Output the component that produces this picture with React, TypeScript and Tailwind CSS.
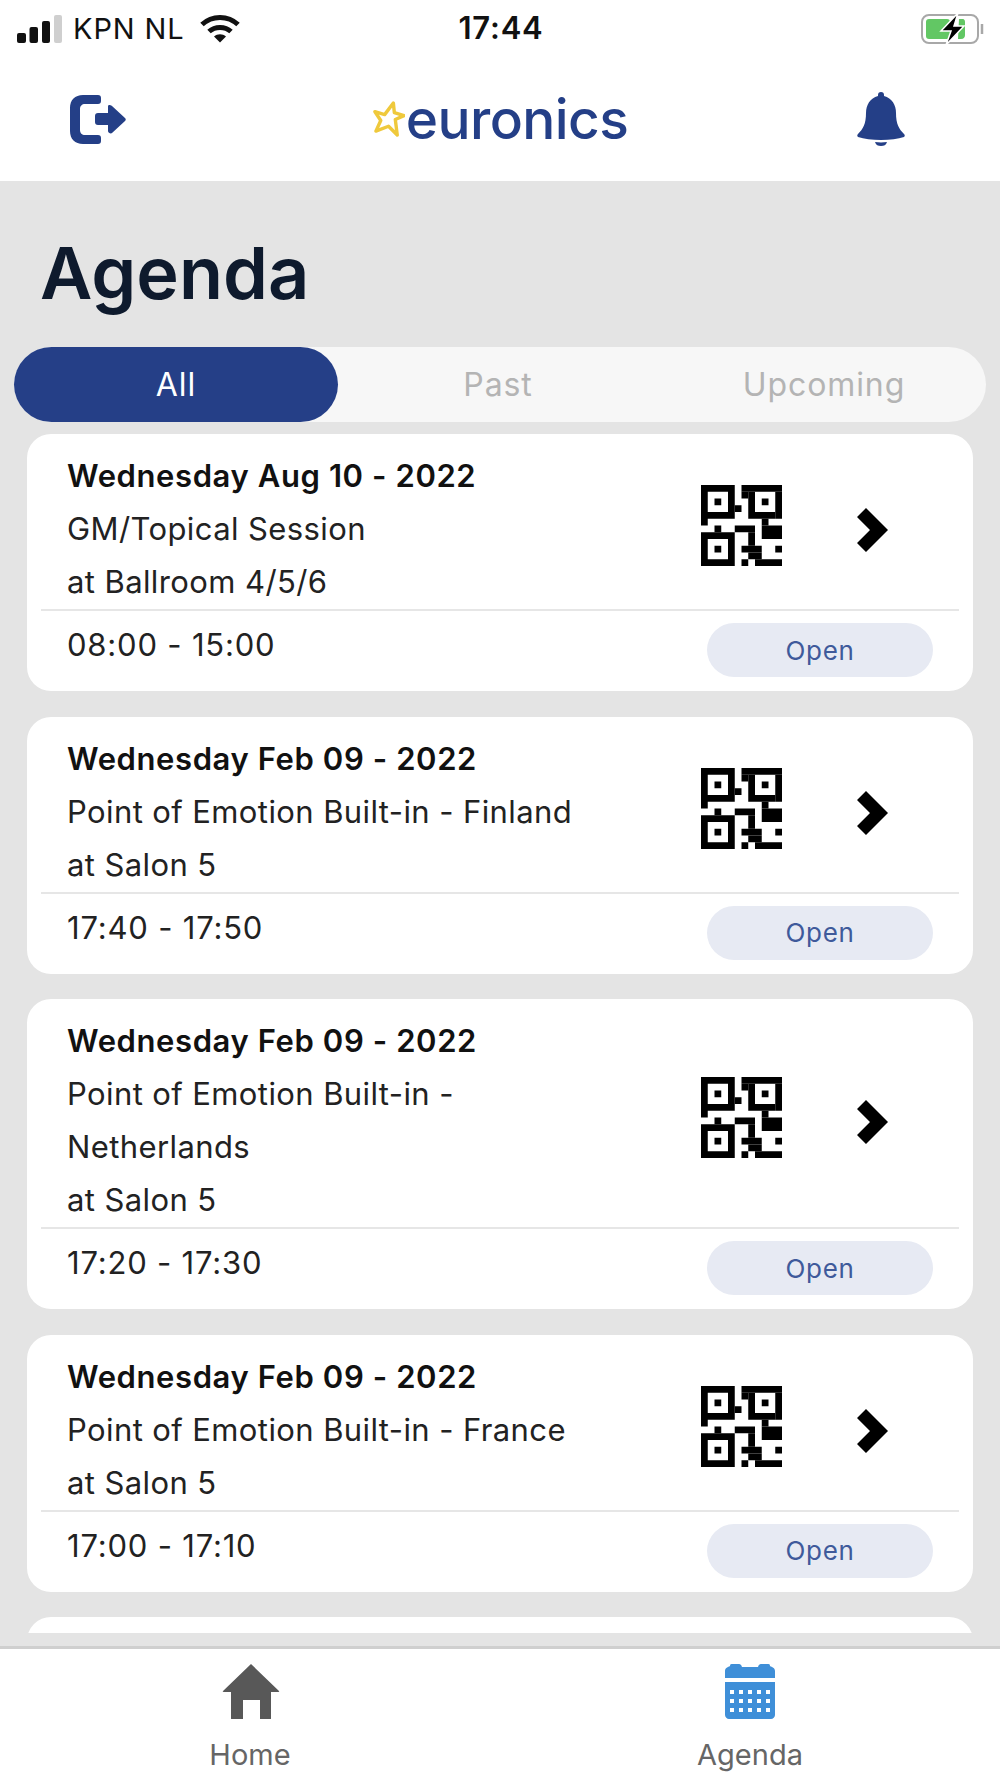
const events = [
  { date: 'Wednesday Aug 10 - 2022', lines: ['GM/Topical Session', 'at Ballroom 4/5/6'], time: '08:00 - 15:00' },
  { date: 'Wednesday Feb 09 - 2022', lines: ['Point of Emotion Built-in - Finland', 'at Salon 5'], time: '17:40 - 17:50' },
  { date: 'Wednesday Feb 09 - 2022', lines: ['Point of Emotion Built-in -', 'Netherlands', 'at Salon 5'], time: '17:20 - 17:30' },
  { date: 'Wednesday Feb 09 - 2022', lines: ['Point of Emotion Built-in - France', 'at Salon 5'], time: '17:00 - 17:10' },
];

// modules of the qr glyph: x, y, w, h on a 12x12 grid
const qrCells = [
  [6, 0, 6, 1], [6, 1, 1, 1], [7, 1, 1, 4], [11, 1, 1, 4], [8, 4, 3, 1], [9, 2, 1, 1],
  [5, 3, 1, 1], [9, 5, 1, 1], [9, 6, 3, 2],
  [2, 6, 1, 1], [5, 6, 3, 1], [7, 7, 1, 2], [6, 9, 3, 1], [7, 10, 2, 1], [6, 11, 1, 1], [8, 11, 4, 1], [11, 9, 1, 1],
];

function QrIcon() {
  return (
    <svg width="81" height="81" viewBox="0 0 12 12" fill="#000">
      <path fillRule="evenodd" d="M0 0h5v5H1v1H0zM1 1v3h3V1z" />
      <rect x="2" y="2" width="1" height="1" />
      <path fillRule="evenodd" d="M0 7h5v5H0zM1 8v3h3V8z" />
      <rect x="2" y="9" width="1" height="1" />
      {qrCells.map(([x, y, w, h], i) => (
        <rect key={i} x={x} y={y} width={w} height={h} />
      ))}
    </svg>
  );
}

function Chevron() {
  return (
    <svg width="31" height="44" viewBox="0 0 31 44" fill="#000">
      <polygon points="9,0 31,22 9,44 0,35 13,22 0,9" />
    </svg>
  );
}

function StatusBar() {
  return (
    <div className="h-[54px] grid grid-cols-3 items-center pl-[17px] pr-[15px] pt-[3px] text-[#111]">
      <div className="flex items-center whitespace-nowrap">
        <svg width="46" height="28" viewBox="0 0 46 28">
          <rect x="0" y="18" width="9" height="10" rx="2" fill="#111" />
          <rect x="12.5" y="12" width="8.5" height="16" rx="2" fill="#111" />
          <rect x="25" y="6" width="8" height="22" rx="2" fill="#111" />
          <rect x="37" y="0" width="8" height="28" rx="2" fill="#cfcfcf" />
        </svg>
        <span className="ml-[10px] text-[29px] tracking-[0.9px]">KPN NL</span>
        <svg className="ml-[15px]" width="40" height="29" viewBox="0 0 40 29" fill="none" stroke="#111" strokeWidth="5">
          <path d="M2 10.5C12 1 28 1 38 10.5" />
          <path d="M9 17.5C15 12 25 12 31 17.5" />
          <path d="M20 28.5l-6-6c3.500-3 8.500-3 12 0z" fill="#111" stroke="none" />
        </svg>
      </div>
      <span className="text-[31px] font-semibold tracking-[0.8px] text-center">17:44</span>
      <svg className="justify-self-end" width="64" height="32" viewBox="0 0 64 32">
        <rect x="1" y="2" width="56" height="28" rx="7" fill="none" stroke="#a8a8a8" strokeWidth="2" />
        <rect x="5" y="6" width="24" height="20" rx="3" fill="#62c764" />
        <path d="M38 6h3c3 0 3 2 3 4v12c0 2-1 4-4 4h-3z" fill="#62c764" />
        <path d="M61 11v10" stroke="#a8a8a8" strokeWidth="2.500" />
        <path d="M37 0L20 18h10l-5 14 18-19H33z" fill="#000" stroke="#fff" strokeWidth="1.500" />
      </svg>
    </div>
  );
}

function Header() {
  return (
    <div className="h-[127px] flex items-center justify-between pl-[69px] pr-[95px] pt-[3px]">
      <svg width="57" height="49" viewBox="0 0 57 49" fill="#243f87">
        <path d="M20 0h9c2 0 3 1 3 3v3c0 2-1 3-3 3H16c-3 0-5 2-5 5v21c0 3 2 5 5 5h13c2 0 3 1 3 3v3c0 2-1 3-3 3H14C6 49 1 44 1 36V13C1 5 6 0 14 0z" />
        <path d="M40 10c1 0 2 0 3 1l13 12c1 1 1 2 0 3L43 38c-1 1-4 0-4-2v-6H29c-2 0-3-1-3-3v-6c0-2 1-3 3-3h10v-6c0-1 0-2 1-2z" />
      </svg>
      <div className="flex items-center ml-[18px]">
        <svg width="32" height="36" viewBox="0 0 33 37" fill="none" stroke="#efc93c" strokeWidth="3.500" strokeLinejoin="round">
          <path d="M21 2l1 10 10 3-9 4 2 16-9-9-13 5 5-11-6-9 10 3z" />
        </svg>
        <span className="ml-[1px] text-[55px] leading-none font-medium tracking-[-0.6px] text-[#243f87]">
          euronics
        </span>
      </div>
      <svg width="48" height="54" viewBox="0 0 48 54" fill="#243f87">
        <path d="M24 0c2 0 3 1 3 3v1c8 2 12 9 12 17 0 11 3 16 8 21 1 1 1 2 0 3-6 2-14 3-23 3S7 47 1 45c-1-1-1-2 0-3 5-5 8-10 8-21C9 13 13 6 21 4V3c0-2 1-3 3-3z" />
        <path d="M18 50c4 .5 8 .5 12 0-1 3-3 4-6 4s-5-1-6-4z" />
      </svg>
    </div>
  );
}

function Tabs() {
  return (
    <div className="mx-[14px] h-[75px] rounded-full bg-[#f7f7f7] grid grid-cols-3 text-[32px] tracking-[0.9px] text-center">
      <div className="rounded-full bg-[#253f87] text-white flex items-center justify-center">All</div>
      <div className="text-[#b4b4b4] flex items-center justify-center pr-[4px]">Past</div>
      <div className="text-[#b4b4b4] flex items-center justify-center">Upcoming</div>
    </div>
  );
}

function EventCard({ date, lines, time }: { date: string; lines: string[]; time: string }) {
  return (
    <div className="bg-white rounded-[24px] mx-[27px] px-[14px]">
      <div className="flex pt-[15px] pb-[1px]">
        <div className="flex-1 pl-[26px] text-[#222] text-[31px] leading-[53px] tracking-[0.4px]">
          <div className="font-semibold text-[#111] tracking-[0.6px]">{date}</div>
          {lines.map((line) => (
            <div key={line}>{line}</div>
          ))}
        </div>
        <div className="flex items-center pb-[6px]">
          <QrIcon />
          <div className="ml-[75px] mr-[71px] pt-[9px]">
            <Chevron />
          </div>
        </div>
      </div>
      <div className="h-[2px] bg-[#e6e6e6]" />
      <div className="flex justify-between pt-[12px] pb-[14px]">
        <span className="pl-[26px] text-[#222] text-[31px] leading-[43px] tracking-[0.8px]">{time}</span>
        <button className="mr-[26px] w-[226px] h-[54px] rounded-full bg-[#e7eaf3] text-[#3f5a9b] text-[26px] tracking-[0.7px]">
          Open
        </button>
      </div>
    </div>
  );
}

function BottomNav() {
  return (
    <div className="h-[132px] bg-white border-t-[3px] border-[#cfcfcf] grid grid-cols-2 text-[29px] leading-none text-[#666] text-center">
      <div className="flex flex-col items-center pt-[14px]">
        <svg className="ml-[2px]" width="58" height="57" viewBox="0 0 58 57" fill="#585858">
          <path fillRule="evenodd" d="M29 1l28 27c.500 1 0 1-1 1h-7v26c0 1 0 1-1 1H10c-1 0-1 0-1-1V29H2c-1 0-1.500 0-1-1zM21 37v19h17V37z" />
        </svg>
        <span className="mt-[20px]">Home</span>
      </div>
      <div className="flex flex-col items-center pt-[14px]">
        <svg width="52" height="56" viewBox="0 0 52 56" fill="#3f8fd8">
          <path d="M6 3c0-2 1-2 3-2h5c2 0 3 0 4 3h16c1-3 2-3 4-3h5c2 0 3 0 3 2 2 1 5 2 5 5v7H1V8c0-3 3-4 5-5z" />
          <path fillRule="evenodd" d="M1 19h50v33c0 2-2 4-4 4H5c-2 0-4-2-4-4zM6 27v4h4v-4zM15 27v4h4v-4zM24 27v4h4v-4zM33 27v4h4v-4zM42 27v4h4v-4zM6 36v4h4v-4zM15 36v4h4v-4zM24 36v4h4v-4zM33 36v4h4v-4zM42 36v4h4v-4zM6 45v4h4v-4zM15 45v4h4v-4zM24 45v4h4v-4zM33 45v4h4v-4zM42 45v4h4v-4z" />
        </svg>
        <span className="mt-[21px]">Agenda</span>
      </div>
    </div>
  );
}

export default function App() {
  return (
    <div className="h-[1778px] w-[1000px] flex flex-col overflow-hidden bg-white [font-family:'Inter',sans-serif]">
      <StatusBar />
      <Header />
      <main className="flex-1 min-h-0 flex flex-col bg-[#e4e4e4]">
        <h1 className="pl-[40px] pt-[46px] pb-[29px] text-[72px] leading-[91px] font-semibold text-[#0e1a2d]">Agenda</h1>
        <Tabs />
        <div className="flex-1 min-h-0 overflow-hidden mt-[12px] mb-[13px] flex flex-col gap-[25.500px]">
          {events.map((event) => (
            <div key={event.time} className="shrink-0">
              <EventCard {...event} />
            </div>
          ))}
          <div className="shrink-0 bg-white rounded-t-[24px] mx-[27px] h-[40px]" />
        </div>
      </main>
      <BottomNav />
    </div>
  );
}
